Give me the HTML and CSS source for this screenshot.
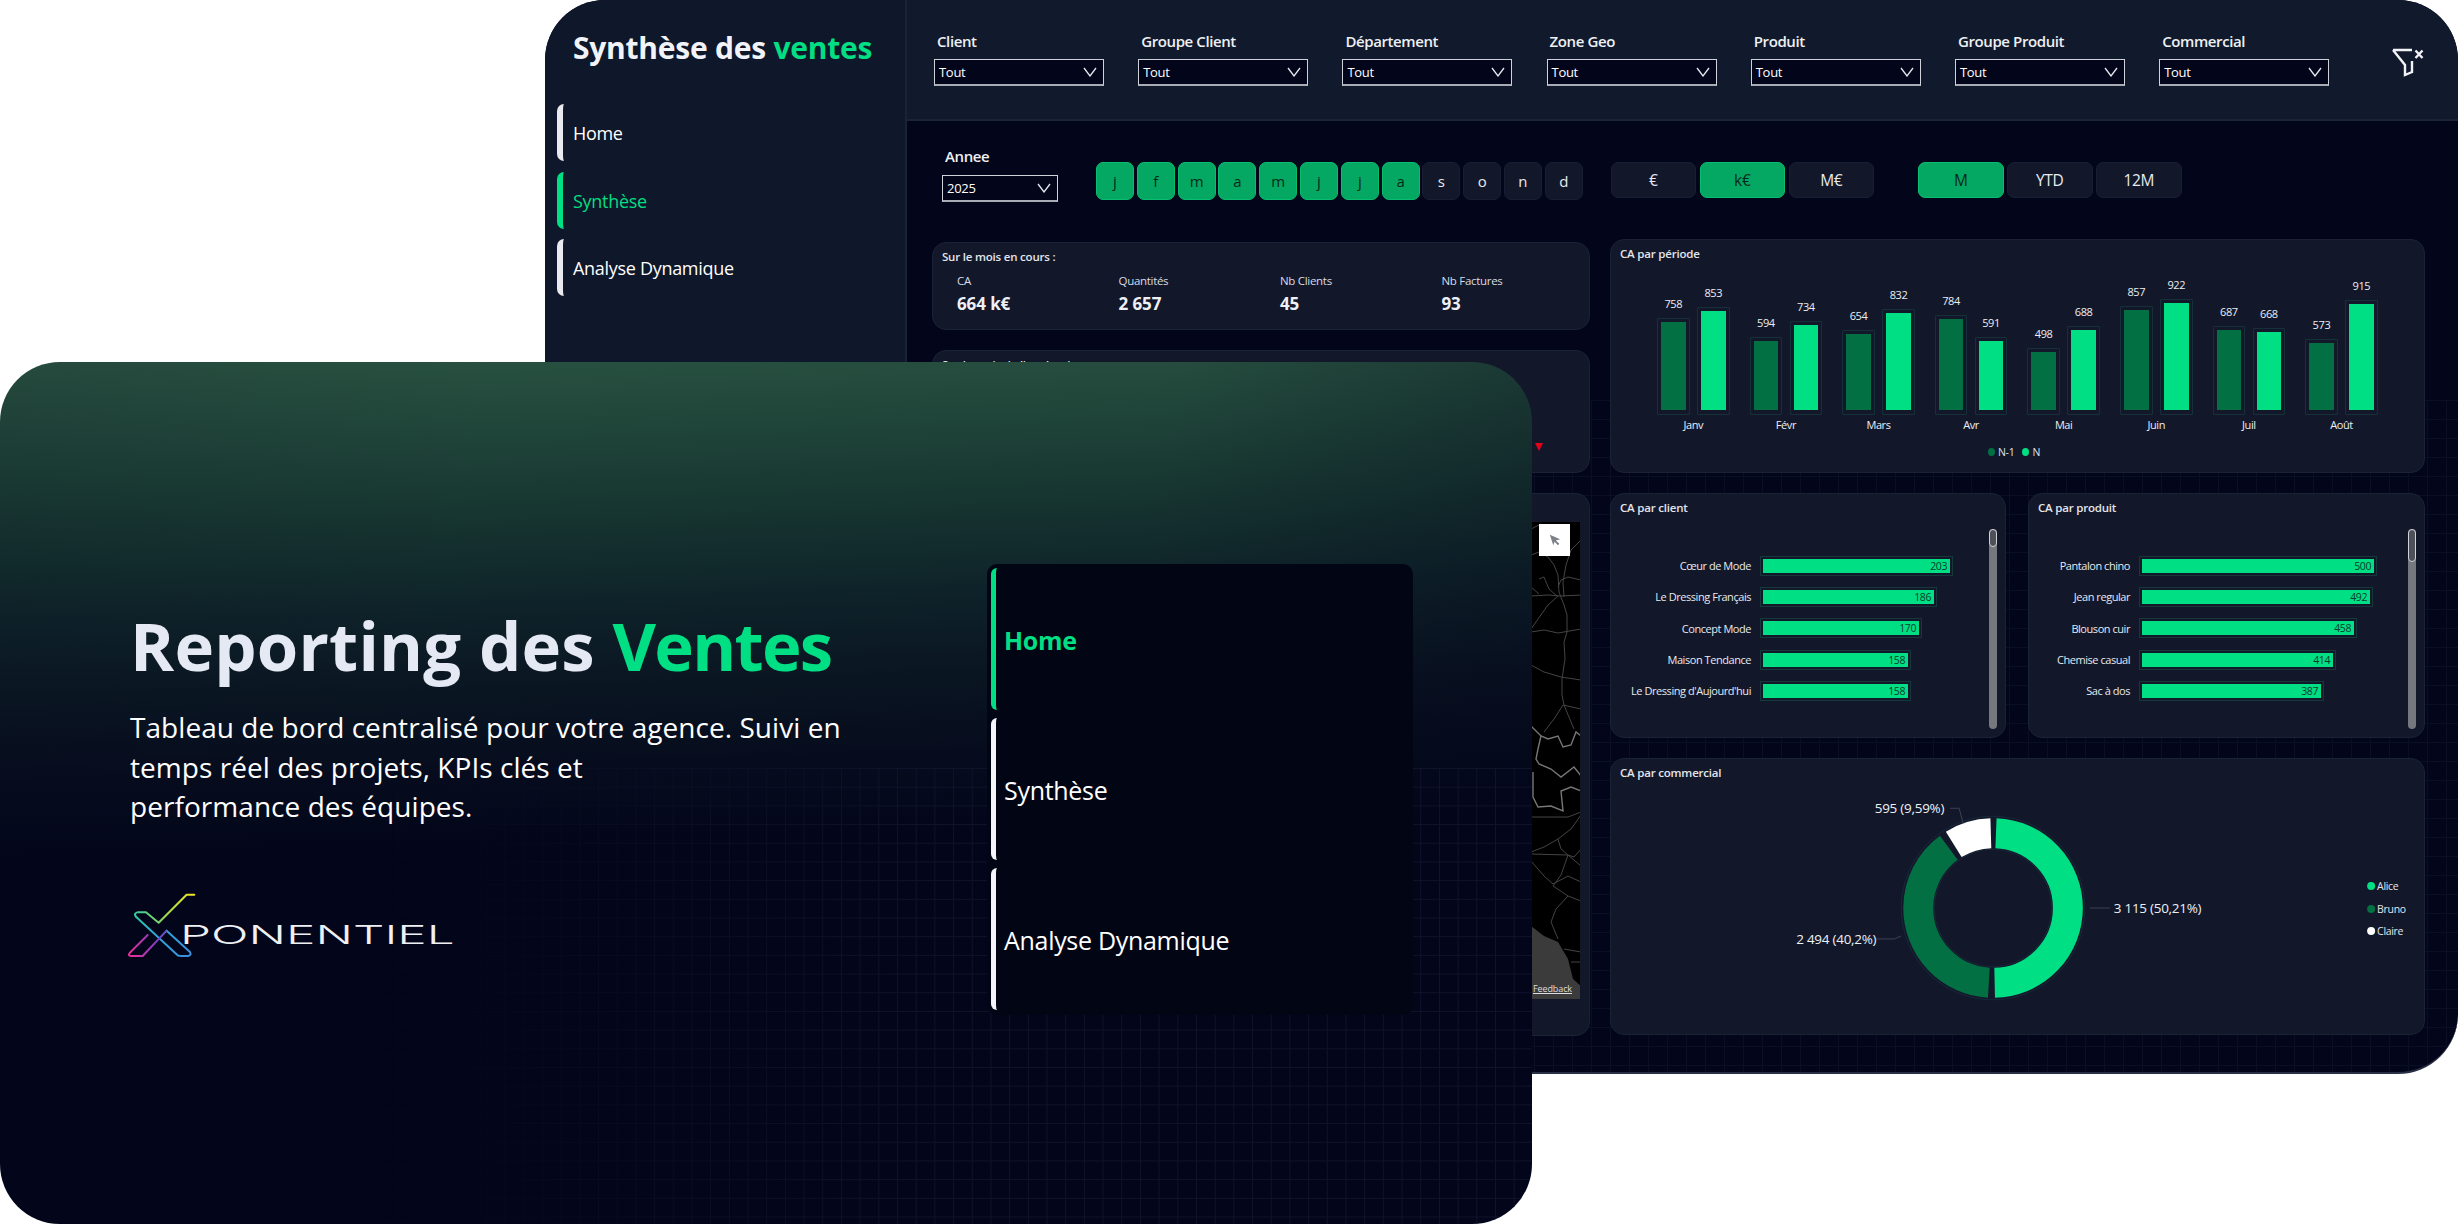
FILE: index.html
```html
<!DOCTYPE html>
<html lang="fr">
<head>
<meta charset="utf-8">
<title>Reporting des Ventes</title>
<link rel="stylesheet" href="styles.css">
</head>
<body>
<section class="dash-window">
  <aside class="side">
    <h2 class="side-title">Synthèse des <em>ventes</em></h2>
    <nav class="side-nav">
      <a class="side-item">Home</a>
      <a class="side-item is-active">Synthèse</a>
      <a class="side-item">Analyse Dynamique</a>
    </nav>
  </aside>
  <div class="main">
    <header class="filters">
      <div class="filter"><label>Client</label><div class="select"><span>Tout</span><svg class="chev" viewBox="0 0 14 10"><path d="M1 1l6 8 6-8"/></svg></div></div>
      <div class="filter"><label>Groupe Client</label><div class="select"><span>Tout</span><svg class="chev" viewBox="0 0 14 10"><path d="M1 1l6 8 6-8"/></svg></div></div>
      <div class="filter"><label>Département</label><div class="select"><span>Tout</span><svg class="chev" viewBox="0 0 14 10"><path d="M1 1l6 8 6-8"/></svg></div></div>
      <div class="filter"><label>Zone Geo</label><div class="select"><span>Tout</span><svg class="chev" viewBox="0 0 14 10"><path d="M1 1l6 8 6-8"/></svg></div></div>
      <div class="filter"><label>Produit</label><div class="select"><span>Tout</span><svg class="chev" viewBox="0 0 14 10"><path d="M1 1l6 8 6-8"/></svg></div></div>
      <div class="filter"><label>Groupe Produit</label><div class="select"><span>Tout</span><svg class="chev" viewBox="0 0 14 10"><path d="M1 1l6 8 6-8"/></svg></div></div>
      <div class="filter"><label>Commercial</label><div class="select"><span>Tout</span><svg class="chev" viewBox="0 0 14 10"><path d="M1 1l6 8 6-8"/></svg></div></div>
      <svg class="funnel" viewBox="0 0 32 30"><path d="M1 3H20M1 3L13 18V28L20 25V14"/><path d="M23.500 3.500l7 7.500M30.500 3.500l-7 7.500"/></svg>
    </header>

    <div class="toolbar">
      <div class="year">
        <label>Annee</label>
        <div class="select select-year"><span>2025</span><svg class="chev" viewBox="0 0 14 10"><path d="M1 1l6 8 6-8"/></svg></div>
      </div>
      <div class="months">
        <button class="chip on">j</button><button class="chip on">f</button><button class="chip on">m</button><button class="chip on">a</button><button class="chip on">m</button><button class="chip on">j</button><button class="chip on">j</button><button class="chip on">a</button><button class="chip">s</button><button class="chip">o</button><button class="chip">n</button><button class="chip">d</button>
      </div>
      <div class="seg seg-unit"><button class="chip">€</button><button class="chip on">k€</button><button class="chip">M€</button></div>
      <div class="seg seg-period"><button class="chip on">M</button><button class="chip">YTD</button><button class="chip">12M</button></div>
    </div>

    <div class="dash">
      <div class="col-left">
        <div class="card card-kpi">
          <h3 class="card-title">Sur le mois en cours :</h3>
          <div class="kpis">
            <div class="kpi"><span>CA</span><b>664 k€</b></div>
            <div class="kpi"><span>Quantités</span><b>2 657</b></div>
            <div class="kpi"><span>Nb Clients</span><b>45</b></div>
            <div class="kpi"><span>Nb Factures</span><b>93</b></div>
          </div>
        </div>
        <div class="card card-evol">
          <h3 class="card-title">Sur le mois de l'an dernier :</h3>
          <div class="evol"><span>-12 %</span><i class="tri"></i></div>
        </div>
        <div class="card card-map">
          <div class="map">
            <svg class="map-svg" viewBox="0 0 49 477">
              <path class="land" d="M0 404L13 414 27 420 37 437 42 457 50 464V477H0Z"/>
              <g class="roads">
                <path d="M0 33L8 30 17 35 23 43 27 53 28 70 33 83 36 93V110L33 120 34 137 31 157V173L33 183 40 200 43 207"/>
                <path d="M50 18L40 28 35 43 32 60 33 75"/>
                <path d="M0 74L17 73 30 74 50 73"/>
                <path d="M0 107L7 97 17 83 27 74"/>
                <path d="M0 110L13 108 27 111 50 107"/>
                <path d="M0 143L13 150 30 155 50 158"/>
                <path d="M32 183L23 197 13 210"/>
                <path d="M32 183L50 187"/>
                <path d="M8 57L13 55 18 67 27 75"/>
                <path d="M0 65L8 72"/>
                <path d="M27 65L30 58 37 55 50 58"/>
                <path d="M0 7L10 2"/>
                <path d="M0 295H37L50 290"/>
                <path d="M50 293L40 307 27 317 13 325 0 330"/>
                <path d="M27 317L30 327 37 333 43 335 50 327"/>
                <path d="M0 332L37 333 50 344"/>
                <path d="M37 333L30 353 22 364 37 374 50 379"/>
                <path d="M0 339L13 354 22 362 37 354 50 360"/>
                <path d="M37 374L25 387 20 400 27 417"/>
                <path d="M33 427L50 430M40 440L50 440"/>
              </g>
              <g class="rivers">
                <path d="M0 204L10 214 17 217 27 214 32 225 40 223 45 210 50 214"/>
                <path d="M10 214L7 227 5 237 8 242 20 247 30 255 43 245 50 254"/>
                <path d="M50 269L40 265 30 269 32 289 20 284 7 285 2 275V250"/>
              </g>
            </svg>
            <div class="map-btn"><svg viewBox="0 0 14 14"><path d="M1 1l12 5-5 1.500 4 4-1.500 1.500-4-4L5 13Z"/></svg></div>
            <span class="feedback">Feedback</span>
          </div>
        </div>
      </div>

      <div class="col-right">
        <div class="card card-period">
          <h3 class="card-title">CA par période</h3>
          <div class="plot">
            <div class="group"><div class="vbar"><span>758</span><div class="frame"><i class="prev" style="height:88px"></i></div></div><div class="vbar"><span>853</span><div class="frame"><i class="cur" style="height:99px"></i></div></div></div>
            <div class="group"><div class="vbar"><span>594</span><div class="frame"><i class="prev" style="height:69px"></i></div></div><div class="vbar"><span>734</span><div class="frame"><i class="cur" style="height:85px"></i></div></div></div>
            <div class="group"><div class="vbar"><span>654</span><div class="frame"><i class="prev" style="height:76px"></i></div></div><div class="vbar"><span>832</span><div class="frame"><i class="cur" style="height:97px"></i></div></div></div>
            <div class="group"><div class="vbar"><span>784</span><div class="frame"><i class="prev" style="height:91px"></i></div></div><div class="vbar"><span>591</span><div class="frame"><i class="cur" style="height:69px"></i></div></div></div>
            <div class="group"><div class="vbar"><span>498</span><div class="frame"><i class="prev" style="height:58px"></i></div></div><div class="vbar"><span>688</span><div class="frame"><i class="cur" style="height:80px"></i></div></div></div>
            <div class="group"><div class="vbar"><span>857</span><div class="frame"><i class="prev" style="height:100px"></i></div></div><div class="vbar"><span>922</span><div class="frame"><i class="cur" style="height:107px"></i></div></div></div>
            <div class="group"><div class="vbar"><span>687</span><div class="frame"><i class="prev" style="height:80px"></i></div></div><div class="vbar"><span>668</span><div class="frame"><i class="cur" style="height:78px"></i></div></div></div>
            <div class="group"><div class="vbar"><span>573</span><div class="frame"><i class="prev" style="height:67px"></i></div></div><div class="vbar"><span>915</span><div class="frame"><i class="cur" style="height:106px"></i></div></div></div>
          </div>
          <div class="plot-axis"><span>Janv</span><span>Févr</span><span>Mars</span><span>Avr</span><span>Mai</span><span>Juin</span><span>Juil</span><span>Août</span></div>
          <div class="legend"><i class="dot prev"></i><span>N-1</span><i class="dot cur"></i><span>N</span></div>
        </div>

        <div class="pair">
          <div class="card card-hbars">
            <h3 class="card-title">CA par client</h3>
            <ul class="hbars">
              <li><span class="hl">Cœur de Mode</span><div class="hframe"><b style="width:187px">203</b></div></li>
              <li><span class="hl">Le Dressing Français</span><div class="hframe"><b style="width:171px">186</b></div></li>
              <li><span class="hl">Concept Mode</span><div class="hframe"><b style="width:156px">170</b></div></li>
              <li><span class="hl">Maison Tendance</span><div class="hframe"><b style="width:145px">158</b></div></li>
              <li><span class="hl">Le Dressing d'Aujourd'hui</span><div class="hframe"><b style="width:145px">158</b></div></li>
            </ul>
            <div class="scroll"><i class="thumb"></i></div>
          </div>
          <div class="card card-hbars card-product">
            <h3 class="card-title">CA par produit</h3>
            <ul class="hbars">
              <li><span class="hl">Pantalon chino</span><div class="hframe"><b style="width:232px">500</b></div></li>
              <li><span class="hl">Jean regular</span><div class="hframe"><b style="width:228px">492</b></div></li>
              <li><span class="hl">Blouson cuir</span><div class="hframe"><b style="width:212px">458</b></div></li>
              <li><span class="hl">Chemise casual</span><div class="hframe"><b style="width:191px">414</b></div></li>
              <li><span class="hl">Sac à dos</span><div class="hframe"><b style="width:179px">387</b></div></li>
            </ul>
            <div class="scroll"><i class="thumb"></i></div>
          </div>
        </div>

        <div class="card card-donut">
          <h3 class="card-title">CA par commercial</h3>
          <svg class="donut" viewBox="0 0 815 240">
            <circle class="ring-line" cx="383" cy="111" r="92"/>
            <circle class="ring-line" cx="383" cy="111" r="59"/>
            <g transform="rotate(-90 383 111)">
              <circle class="seg-a" cx="383" cy="111" r="75" stroke-dasharray="230.6 240.6" stroke-dashoffset="-3"/>
              <circle class="seg-b" cx="383" cy="111" r="75" stroke-dasharray="183.4 287.8" stroke-dashoffset="-239.6"/>
              <circle class="seg-c" cx="383" cy="111" r="75" stroke-dasharray="39.200 432" stroke-dashoffset="-429"/>
            </g>
            <path class="leader" d="M480 111H500M266 142H284L291 139M340 11H349L353 26"/>
            <text class="dl" x="504" y="116">3 115 (50,21%)</text>
            <text class="dl end" x="266" y="147">2 494 (40,2%)</text>
            <text class="dl end" x="334" y="16">595 (9,59%)</text>
            <circle class="lg-a" cx="762" cy="89" r="4"/><text class="ll" x="768" y="93">Alice</text>
            <circle class="lg-b" cx="762" cy="112" r="4"/><text class="ll" x="768" y="116">Bruno</text>
            <circle class="lg-c" cx="762" cy="134" r="4"/><text class="ll" x="768" y="138">Claire</text>
          </svg>
        </div>
      </div>
    </div>
  </div>
</section>

<section class="hero-window">
  <div class="hero">
    <h1 class="hero-title">Reporting des <em>Ventes</em></h1>
    <p class="hero-text">Tableau de bord centralisé pour votre agence. Suivi en<br>temps réel des projets, KPIs clés et<br>performance des équipes.</p>
    <svg class="logo" viewBox="50 30 1000 210">
      <defs>
        <linearGradient id="lgA" gradientUnits="userSpaceOnUse" x1="255" y1="44" x2="78" y2="110"><stop offset="0" stop-color="#f2e625"/><stop offset=".5" stop-color="#a6dc4a"/><stop offset="1" stop-color="#2fc9a0"/></linearGradient>
        <linearGradient id="lgB" gradientUnits="userSpaceOnUse" x1="80" y1="108" x2="240" y2="228"><stop offset="0" stop-color="#2fc9a0"/><stop offset=".4" stop-color="#2ea6d8"/><stop offset="1" stop-color="#3b8fe0"/></linearGradient>
        <linearGradient id="lgC" gradientUnits="userSpaceOnUse" x1="60" y1="228" x2="240" y2="170"><stop offset="0" stop-color="#ee2f97"/><stop offset=".5" stop-color="#7a3fc0"/><stop offset="1" stop-color="#3b8fe0"/></linearGradient>
      </defs>
      <path class="lg-stroke" stroke="url(#lgA)" d="M255 44H232L148 128 110 97H84Q72 100 80 110"/>
      <path class="lg-stroke" stroke="url(#lgB)" d="M80 110L205 226Q208 229 236 228 248 226 242 216L172 152"/>
      <path class="lg-stroke" stroke="url(#lgC)" d="M115 165L62 218Q54 228 66 228H100L172 152"/>
      <text class="logo-text" x="212" y="192" textLength="825" lengthAdjust="spacingAndGlyphs">PONENTIEL</text>
    </svg>
  </div>
  <nav class="hero-nav">
    <a class="hero-item is-active">Home</a>
    <a class="hero-item">Synthèse</a>
    <a class="hero-item">Analyse Dynamique</a>
  </nav>
</section>
</body>
</html>
```
FILE: styles.css
```css
* { box-sizing: border-box; }
html, body { margin: 0; height: 100%; }
body {
  position: relative;
  width: 2458px;
  height: 1224px;
  overflow: hidden;
  background: #fff;
  font-family: "Open Sans", "Noto Sans", sans-serif;
  color: #fff;
}
h1, h2, h3, p, ul { margin: 0; padding: 0; }
em { font-style: normal; color: #00df83; }
button { font: inherit; color: inherit; padding: 0; }

/* Back window */
.dash-window {
  position: absolute;
  left: 545px;
  top: 0;
  width: 1913px;
  height: 1074px;
  display: grid;
  grid-template-columns: 362px 1fr;
  border-radius: 60px;
  overflow: hidden;
  background: #03051a;
  border-bottom: 2px solid #2a3044;
}
.side {
  background: #0f172a;
  border-right: 2px solid #1a2336;
  padding: 27px 0 0 12px;
}
.side-title {
  font-size: 30px;
  line-height: 42px;
  font-weight: 700;
  padding-left: 16px;
  color: #f1f3f8;
  letter-spacing: -.25px;
}
.side-nav { display: flex; flex-direction: column; gap: 10.500px; margin-top: 35px; }
.side-item {
  height: 57px;
  display: flex;
  align-items: center;
  padding: 1px 0 0 10px;
  border-left: 6px solid #e8eaf0;
  border-radius: 7px 0 0 7px;
  font-size: 18px;
  letter-spacing: -.3px;
}
.side-item.is-active { border-left-color: #00df83; color: #00df83; }

.main { position: relative; display: flex; flex-direction: column; min-width: 0; }
.main::before {
  content: "";
  position: absolute;
  inset: 400px 0 0 0;
  background-image:
    linear-gradient(#0b0f26 1px, transparent 1px),
    linear-gradient(90deg, #0b0f26 1px, transparent 1px);
  background-size: 19px 19px;
}

.filters {
  position: relative;
  height: 121px;
  flex: none;
  background: #111a2c;
  border-bottom: 2px solid #1b2436;
  padding: 30px 0 0 27px;
  display: flex;
  align-items: flex-start;
  gap: 34.2px;
}
.filter { width: 170px; }
.filter label {
  display: block;
  padding-left: 3px;
  font-size: 15px;
  line-height: 22px;
  font-weight: 600;
  color: #eef0f4;
  letter-spacing: -.4px;
  margin-bottom: 7px;
}
.select {
  height: 27px;
  display: flex;
  align-items: center;
  justify-content: space-between;
  padding: 0 6px 0 4px;
  background: #03051a;
  border: 1px solid #cfd2d8;
  border-bottom: 2px solid #a9acb4;
  font-size: 13px;
  letter-spacing: -.3px;
}
.chev { width: 14px; height: 10px; fill: none; stroke: #e6e8ee; stroke-width: 1.300; }
.funnel { width: 32px; height: 30px; margin: 17px 0 0 29px; flex: none; fill: none; stroke: #f2f3f6; stroke-width: 2.400; }

.toolbar {
  position: relative;
  height: 118px;
  flex: none;
  display: flex;
  align-items: flex-start;
  padding: 24px 0 0 35px;
}
.year { width: 116px; }
.year label {
  display: block;
  padding-left: 3px;
  font-size: 15px;
  line-height: 22px;
  font-weight: 600;
  letter-spacing: -.4px;
  color: #eef0f4;
  margin-bottom: 8px;
}
.select-year { height: 27px; }
.months { display: flex; gap: 2.800px; margin: 17px 0 0 38px; }
.chip {
  width: 38px;
  height: 38px;
  border: 1px solid #181f33;
  border-radius: 7px;
  background: #121829;
  font-size: 15px;
  color: #e8eaf0;
  display: flex;
  align-items: center;
  justify-content: center;
}
.chip.on { background: #05a862; border-color: #06bd70; color: #032a19; }
.seg { display: flex; margin-top: 17px; }
.seg .chip { height: 36px; font-size: 15.500px; letter-spacing: -.3px; }
.seg-unit { gap: 4px; margin-left: 28px; }
.seg-unit .chip { width: 85px; }
.seg-period { gap: 3px; margin-left: 44px; }
.seg-period .chip { width: 86px; }

.dash {
  position: relative;
  display: grid;
  grid-template-columns: 658px 815px;
  column-gap: 20px;
  padding-left: 25px;
}
.col-left { display: flex; flex-direction: column; gap: 20px; padding-top: 3px; }
.col-right { display: flex; flex-direction: column; gap: 20px; }
.card {
  position: relative;
  background: #12182a;
  border: 1px solid #1b2236;
  border-radius: 14px;
}
.card-title {
  font-size: 11.500px;
  line-height: 16px;
  font-weight: 600;
  color: #e2e5ec;
  padding: 6px 0 0 9px;
  letter-spacing: -.2px;
}
.card-kpi { height: 88px; }
.kpis { display: grid; grid-template-columns: repeat(4, 161.5px); padding: 6px 0 0 24px; }
.kpi { display: flex; flex-direction: column; }
.kpi span { font-size: 11.500px; line-height: 20px; font-weight: 500; color: #d8dbe3; letter-spacing: -.3px; }
.kpi b { font-size: 17px; line-height: 26px; font-weight: 700; color: #eef0f5; letter-spacing: -.1px; }
.card-evol { height: 123px; display: flex; flex-direction: column; }
.evol {
  margin-top: auto;
  padding: 0 46px 17px 0;
  display: flex;
  justify-content: flex-end;
  align-items: center;
  gap: 3px;
  color: #e3021a;
  font-size: 12px;
  font-weight: 600;
}
.tri { width: 0; height: 0; border: 4.500px solid transparent; border-top: 8px solid #e3021a; border-bottom: 0; }
.card-map { height: 543px; padding: 28px 9px 0 0; }
.map {
  position: relative;
  margin-left: 8px;
  height: 477px;
  background: #000;
  display: flex;
  justify-content: flex-end;
}
.map-svg { width: 49px; height: 477px; display: block; fill: none; }
.land { fill: #3b3b3b; }
.roads path { stroke: #444; stroke-width: 1; fill: none; }
.rivers path { stroke: #777; stroke-width: 1.400; fill: none; }
.map-btn {
  position: absolute;
  right: 10px;
  top: 2px;
  width: 31px;
  height: 32px;
  background: #fff;
  display: flex;
  align-items: center;
  justify-content: center;
}
.map-btn svg { width: 12px; height: 12px; fill: #7c8088; }
.feedback {
  position: absolute;
  right: 8px;
  bottom: 4px;
  font-size: 9px;
  line-height: 12px;
  color: #ddd;
  text-decoration: underline;
  letter-spacing: -.1px;
}

.card-period { height: 234px; }
.plot {
  height: 137px;
  margin: 15.500px 0 0 46px;
  display: flex;
  align-items: flex-end;
}
.group { width: 92.600px; flex: none; display: flex; align-items: flex-end; gap: 7.400px; }
.vbar { width: 32.600px; display: flex; flex-direction: column; align-items: center; }
.vbar span { font-size: 11px; line-height: 14px; margin-bottom: 7px; color: #eceef3; letter-spacing: -.4px; }
.frame { width: 32.600px; border: 1px solid #16303a; border-radius: 1px; padding: 3px 3px 4px; }
.frame i { display: block; }
.prev { background: #037043; }
.cur { background: #00df83; }
.plot-axis { display: flex; margin-left: 46px; height: 20px; align-items: center; }
.plot-axis span { width: 92.600px; padding-right: 20px; text-align: center; font-size: 11px; letter-spacing: -.4px; color: #eceef3; }
.legend { display: flex; align-items: center; justify-content: center; gap: 3px; margin: 7px 0 0 -7px; font-size: 10.500px; letter-spacing: -.3px; line-height: 20px; color: #dfe2ea; }
.legend span + .dot { margin-left: 5px; }
.dot { width: 7px; height: 8px; border-radius: 50%; }

.pair { display: grid; grid-template-columns: 396px 397px; column-gap: 22px; }
.card-hbars { height: 245px; }
.hbars { list-style: none; margin-top: 34px; }
.hbars li { height: 31.300px; display: flex; align-items: center; }
.hl { width: 140px; text-align: right; font-size: 11px; letter-spacing: -.45px; color: #e7e9ef; white-space: nowrap; }
.hframe { margin-left: 9px; border: 1px solid #15393b; padding: 2px; display: flex; }
.hframe b {
  display: block;
  height: 14px;
  background: #00df83;
  color: #0b3a2c;
  font-size: 10.500px;
  font-weight: 400;
  line-height: 14px;
  text-align: right;
  padding-right: 3px;
  letter-spacing: -.4px;
}
.card-product .hl { width: 101px; }
.scroll {
  position: absolute;
  top: 35px;
  right: 8px;
  width: 8px;
  height: 200px;
  background: #75787f;
  border-radius: 4px;
}
.thumb {
  display: block;
  width: 8px;
  height: 18px;
  background: #4d5059;
  border: 1px solid #cfd2d8;
  border-radius: 4px;
}
.card-product .thumb { height: 33px; }
.card-donut { height: 277px; }
.donut { display: block; width: 813px; height: 240px; margin-top: 15.500px; }
.ring-line { fill: none; stroke: #17283a; stroke-width: 1; }
.donut circle[class^="seg"] { fill: none; stroke-width: 30; }
.seg-a { stroke: #00df83; }
.seg-b { stroke: #037043; }
.seg-c { stroke: #fff; }
.leader { fill: none; stroke: #3b4252; stroke-width: 1; }
.dl { font-size: 13.500px; fill: #eef0f4; letter-spacing: -.25px; }
.dl.end { text-anchor: end; }
.ll { font-size: 10.500px; fill: #e4e6ec; letter-spacing: -.3px; }
.lg-a { fill: #00df83; }
.lg-b { fill: #037043; }
.lg-c { fill: #fff; }

/* Front window */
.hero-window {
  position: absolute;
  left: 0;
  top: 362px;
  width: 1532px;
  height: 862px;
  border-radius: 60px;
  overflow: hidden;
  display: flex;
  background:
    linear-gradient(100deg, rgba(3,5,26,.12) 0%, rgba(3,5,26,0) 30%, rgba(3,5,26,0) 70%, rgba(3,5,26,.35) 100%),
    linear-gradient(178deg, #2a5342 0, #1f4439 90px, #15322f 185px, #0e2229 265px, #0a1522 345px, #060c1d 425px, #03051a 510px);
}
.hero-window::before {
  content: "";
  position: absolute;
  inset: 406px 0 0 0;
  background-image:
    linear-gradient(#10132a 1px, transparent 1px),
    linear-gradient(90deg, #10132a 1px, transparent 1px);
  background-size: 18.700px 18.700px;
  -webkit-mask-image: linear-gradient(90deg, transparent 25%, #000 60%);
  mask-image: linear-gradient(90deg, transparent 25%, #000 60%);
}
.hero {
  position: relative;
  width: 987px;
  flex: none;
  padding: 240px 0 0 130px;
}
.hero-title {
  font-size: 67px;
  line-height: 86px;
  font-weight: 700;
  color: #e5e9f3;
  letter-spacing: .2px;
  white-space: nowrap;
}
.hero-title em { letter-spacing: -1.700px; }
.hero-text {
  margin-top: 20px;
  font-size: 28px;
  line-height: 39.500px;
  letter-spacing: .05px;
  color: #fff;
  white-space: nowrap;
}
.logo { display: block; width: 333px; height: 70px; margin: 63.500px 0 0 -4px; }
.lg-stroke { fill: none; stroke-width: 6; stroke-linecap: round; stroke-linejoin: round; }
.logo-text { font-family: Inter, "Open Sans", sans-serif; font-weight: 300; font-size: 78px; fill: #eef0f4; }

.hero-nav {
  position: relative;
  width: 426px;
  height: 451px;
  margin-top: 202px;
  padding: 4px;
  background: #020514;
  border-radius: 10px;
  display: flex;
  flex-direction: column;
  gap: 8px;
}
.hero-item {
  height: 142px;
  display: flex;
  align-items: center;
  padding: 2px 0 0 8px;
  border-left: 5px solid #f4f5f8;
  border-radius: 6px 0 0 6px;
  font-size: 25px;
  letter-spacing: -.3px;
}
.hero-item.is-active { border-left-color: #00df83; color: #00df83; font-weight: 700; }
```
